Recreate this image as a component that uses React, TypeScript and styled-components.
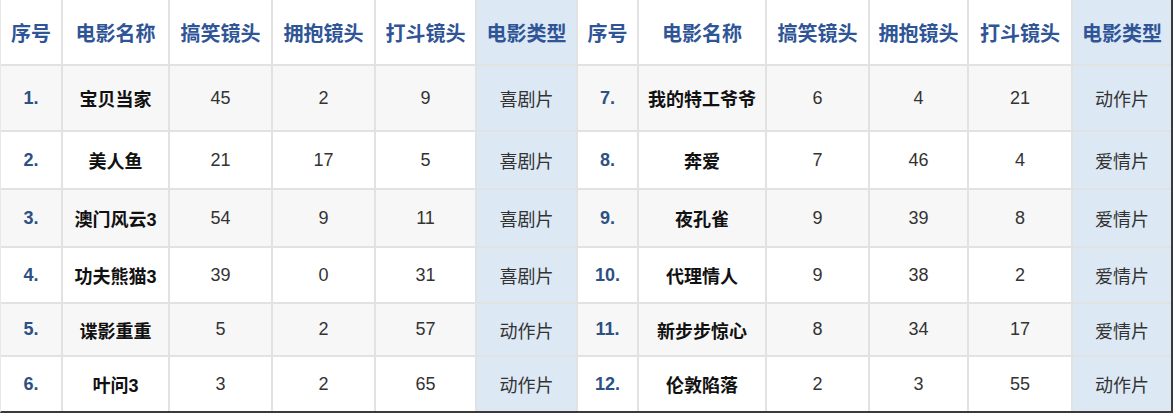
import React from "react";
import styled, { createGlobalStyle, css } from "styled-components";

const GlobalStyle = createGlobalStyle`
  html, body { margin: 0; padding: 0; background: #ffffff; }
  body { font-family: "Liberation Sans", "Noto Sans CJK SC", sans-serif; }
`;

const Grid = styled.div`
  display: grid;
  grid-template-columns: 60px 105px 101px 101px 99px 99px 59px 126px 101px 97px 102px 98px;
  grid-template-rows: 64px 64px 56px 56px 54px 51px 54px;
  gap: 2px;
  width: 1173px;
  box-sizing: border-box;
  background: #e2e2e2;
  border-left: 1px solid #e8e8e8;
  border-right: 2px solid #3a3a3a;
  border-bottom: 2px solid #3a3a3a;
`;

type CellKind = "head" | "serial" | "name" | "num" | "type";

const Cell = styled.div<{ $kind: CellKind; $alt?: boolean }>`
  display: flex;
  align-items: center;
  justify-content: center;
  background: ${(p) => (p.$kind === "type" ? "#dde8f5" : p.$alt ? "#f7f7f7" : "#ffffff")};
  font-family: "Liberation Sans", "Noto Sans CJK SC", sans-serif;
  font-size: 18px;
  color: #333333;
  white-space: nowrap;
  ${(p) =>
    p.$kind === "head" &&
    css`
      font-size: 20px;
      font-weight: 700;
      color: #2f5597;
    `}
  ${(p) =>
    p.$kind === "serial" &&
    css`
      font-weight: 700;
      color: #2c5183;
    `}
  ${(p) =>
    p.$kind === "name" &&
    css`
      font-weight: 700;
      color: #111111;
    `}
`;

const HeadCell = styled(Cell)<{ $blue?: boolean }>`
  background: ${(p) => (p.$blue ? "#dde8f5" : "#ffffff")};
`;

type Movie = { no: string; name: string; a: number; b: number; c: number; type: string };

const left: Movie[] = [
  { no: "1.", name: "宝贝当家", a: 45, b: 2, c: 9, type: "喜剧片" },
  { no: "2.", name: "美人鱼", a: 21, b: 17, c: 5, type: "喜剧片" },
  { no: "3.", name: "澳门风云3", a: 54, b: 9, c: 11, type: "喜剧片" },
  { no: "4.", name: "功夫熊猫3", a: 39, b: 0, c: 31, type: "喜剧片" },
  { no: "5.", name: "谍影重重", a: 5, b: 2, c: 57, type: "动作片" },
  { no: "6.", name: "叶问3", a: 3, b: 2, c: 65, type: "动作片" },
];

const right: Movie[] = [
  { no: "7.", name: "我的特工爷爷", a: 6, b: 4, c: 21, type: "动作片" },
  { no: "8.", name: "奔爱", a: 7, b: 46, c: 4, type: "爱情片" },
  { no: "9.", name: "夜孔雀", a: 9, b: 39, c: 8, type: "爱情片" },
  { no: "10.", name: "代理情人", a: 9, b: 38, c: 2, type: "爱情片" },
  { no: "11.", name: "新步步惊心", a: 8, b: 34, c: 17, type: "爱情片" },
  { no: "12.", name: "伦敦陷落", a: 2, b: 3, c: 55, type: "动作片" },
];

const headers = ["序号", "电影名称", "搞笑镜头", "拥抱镜头", "打斗镜头", "电影类型"];

const MovieCells: React.FC<{ m: Movie; alt: boolean }> = ({ m, alt }) => (
  <>
    <Cell $kind="serial" $alt={alt}>{m.no}</Cell>
    <Cell $kind="name" $alt={alt}>{m.name}</Cell>
    <Cell $kind="num" $alt={alt}>{m.a}</Cell>
    <Cell $kind="num" $alt={alt}>{m.b}</Cell>
    <Cell $kind="num" $alt={alt}>{m.c}</Cell>
    <Cell $kind="type" $alt={alt}>{m.type}</Cell>
  </>
);

export default function App() {
  return (
    <>
      <GlobalStyle />
      <Grid>
        {[0, 1].map((side) =>
          headers.map((h, i) => (
            <HeadCell key={`h${side}-${i}`} $kind="head" $blue={i === 5}>
              {h}
            </HeadCell>
          ))
        )}
        {left.map((m, r) => (
          <React.Fragment key={m.no}>
            <MovieCells m={m} alt={r % 2 === 0} />
            <MovieCells m={right[r]} alt={r % 2 === 0} />
          </React.Fragment>
        ))}
      </Grid>
    </>
  );
}
